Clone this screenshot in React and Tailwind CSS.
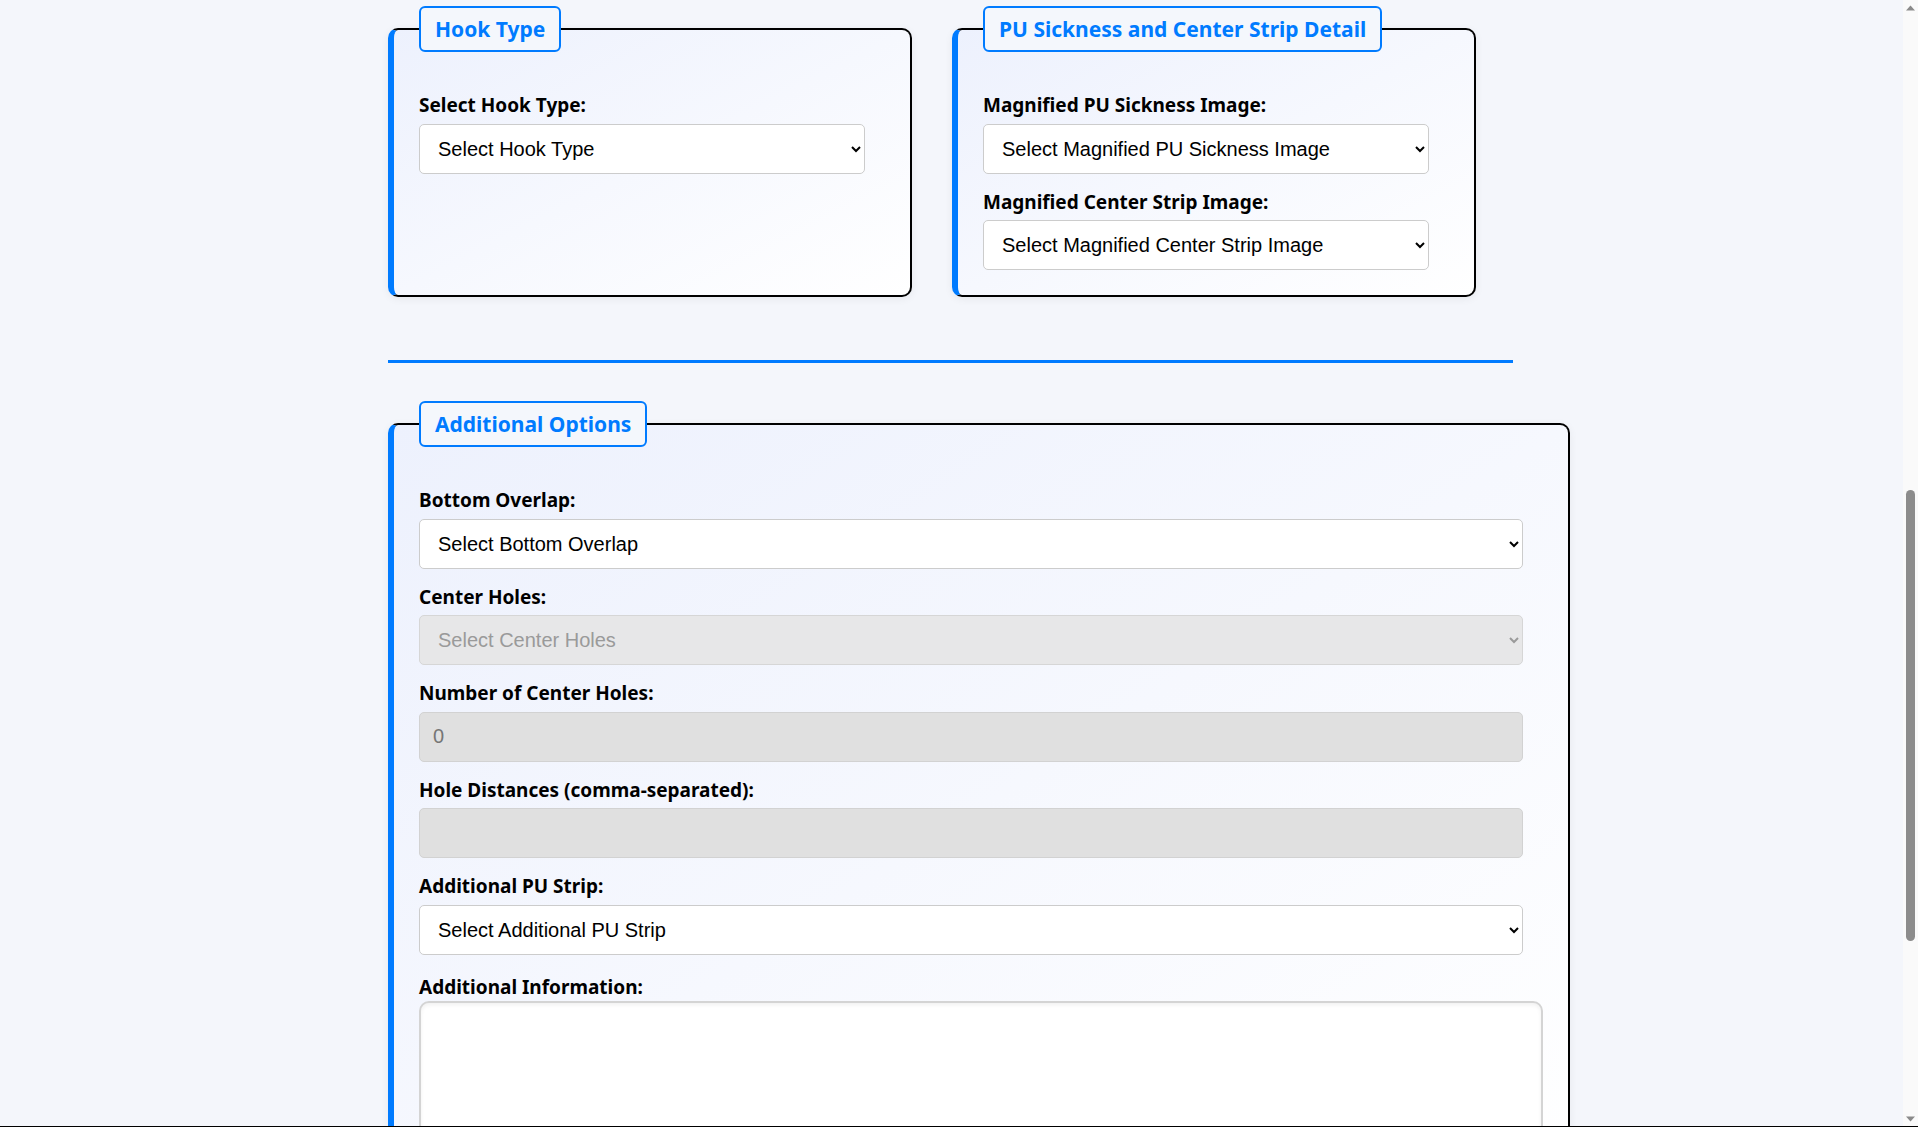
import React from 'react';

const labelCls = "block pt-[1px] mb-[6px] text-[19px] leading-[24.5px] font-bold text-black font-['Noto_Sans',sans-serif]";
const selectCls = "block w-[calc(100%-20px)] h-[50px] pl-[14px] pr-[4px] text-[20px] font-['Liberation_Sans',Arial,sans-serif] bg-white text-black border border-[#cccccc] rounded-[5px]";
const disabledSelectCls = "block w-[calc(100%-20px)] h-[50px] pl-[14px] pr-[4px] text-[20px] font-['Liberation_Sans',Arial,sans-serif] bg-[#e7e7e8] text-[#9a9a9a] border border-[#d6d6d6] rounded-[5px]";
const inputCls = "block w-[calc(100%-20px)] h-[50px] px-[13px] text-[20px] font-['Liberation_Sans',Arial,sans-serif] bg-[#e0e0e0] text-[#767676] border border-[#d2d2d2] rounded-[5px]";

const Card = ({ title, className = '', children }) => (
  <div className={`relative rounded-[10px] border-2 border-black border-l-[6px] border-l-[#007bff] bg-linear-to-br from-[#edf1fd] to-white shadow-[0_2px_8px_rgba(0,0,0,0.06)] pt-[62px] px-[25px] pb-[25px] ${className}`}>
    <div className="absolute top-[-24px] left-[25px] px-[14px] py-[6px] border-2 border-[#007bff] rounded-[6px] bg-[#f4f7fc]">
      <h2 className="text-[21px] leading-[30px] font-bold text-[#007bff] font-['Noto_Sans',sans-serif] whitespace-nowrap">{title}</h2>
    </div>
    {children}
  </div>
);

const Field = ({ label, labelClass = '', children }) => (
  <div className="mb-[15px] last:mb-0">
    <label className={`${labelCls} ${labelClass}`}>{label}</label>
    {children}
  </div>
);

const Sel = ({ placeholder, disabled }) => (
  <select className={disabled ? disabledSelectCls : selectCls} disabled={disabled} defaultValue="">
    <option value="">{placeholder}</option>
  </select>
);

const Scrollbar = () => (
  <div className="w-[15px] shrink-0 flex flex-col bg-[#fafafa]">
    <div className="h-[15px] flex items-center justify-center">
      <svg width="9" height="6" viewBox="0 0 9 6"><path d="M0 5.5 L4.5 0.5 L9 5.5 Z" fill="#8a8a8a" /></svg>
    </div>
    <div className="h-[475px] shrink-0" />
    <div className="h-[451px] w-[9px] mx-auto rounded-full bg-[#8c8c8c]" />
    <div className="flex-1" />
    <div className="h-[15px] flex items-center justify-center">
      <svg width="9" height="6" viewBox="0 0 9 6"><path d="M0 0.5 L4.5 5.5 L9 0.5 Z" fill="#8a8a8a" /></svg>
    </div>
  </div>
);

export default function App() {
  return (
    <div className="h-screen flex overflow-hidden bg-[#f4f6fb] border-b border-black">
      <main className="flex-1 min-w-0 overflow-hidden">
        <div className="ml-[388px] w-[1182px] pt-[28px]">
          <div className="flex gap-[40px]">
            <Card title="Hook Type" className="w-[524px]">
              <Field label="Select Hook Type:">
                <Sel placeholder="Select Hook Type" />
              </Field>
            </Card>
            <Card title="PU Sickness and Center Strip Detail" className="w-[524px]">
              <Field label="Magnified PU Sickness Image:">
                <Sel placeholder="Select Magnified PU Sickness Image" />
              </Field>
              <Field label="Magnified Center Strip Image:">
                <Sel placeholder="Select Magnified Center Strip Image" />
              </Field>
            </Card>
          </div>

          <hr className="w-[1125px] h-[3px] bg-[#007bff] border-0 mt-[63px] mb-[60px]" />

          <Card title="Additional Options" className="w-full">
            <Field label="Bottom Overlap:">
              <Sel placeholder="Select Bottom Overlap" />
            </Field>
            <Field label="Center Holes:">
              <Sel placeholder="Select Center Holes" disabled />
            </Field>
            <Field label="Number of Center Holes:">
              <input type="number" className={inputCls} value="0" disabled readOnly />
            </Field>
            <Field label="Hole Distances (comma-separated):">
              <input type="text" className={inputCls} value="" disabled readOnly />
            </Field>
            <Field label="Additional PU Strip:">
              <Sel placeholder="Select Additional PU Strip" />
            </Field>
            <Field label="Additional Information:" labelClass="!pt-[5px] !mb-[2px]">
              <textarea className="block w-full h-[160px] p-[12px] text-[20px] font-['Liberation_Sans',Arial,sans-serif] bg-white border-2 border-[#d4d4d4] rounded-[10px] shadow-[inset_0_2px_4px_rgba(0,0,0,0.06)] resize-none" />
            </Field>
          </Card>
        </div>
      </main>
      <Scrollbar />
    </div>
  );
}
